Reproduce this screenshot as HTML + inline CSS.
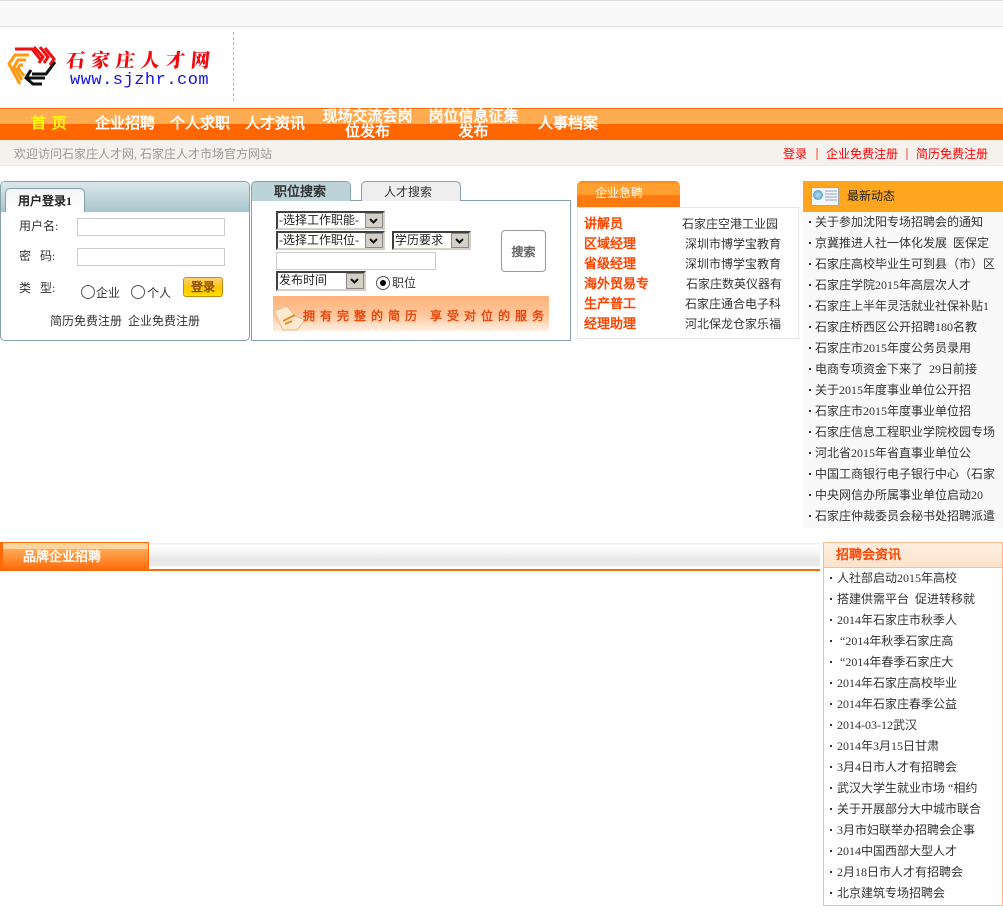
<!DOCTYPE html>
<html><head><meta charset="utf-8"><title>石家庄人才网</title>
<style>
html,body{margin:0;padding:0;background:#fff;width:1003px;height:912px;overflow:hidden}
body{position:relative;font:12px/16px "Liberation Serif",SimSun,"宋体","WenQuanYi Zen Hei Sharp","WenQuanYi Zen Hei",serif;color:#333}
div,span.a,svg{position:absolute}
.t{white-space:nowrap}
.n{color:#fff;font-weight:bold;font-size:15px;line-height:15px;text-align:center;white-space:nowrap}
.in{background:#fff;border:1px solid #ccc;box-sizing:border-box}
.rd{width:14px;height:14px;border-radius:50%;border:1px solid #555;box-sizing:border-box;background:#fff}
.sel{background:#fff;box-sizing:border-box;border-style:solid;border-width:2px;border-color:#404040 #d4d0c8 #d4d0c8 #404040;color:#222;white-space:nowrap;padding-left:1px;line-height:15px}
.ar{right:0;top:0;bottom:0;width:18px;background:#d4d0c8;border:1px solid #888;box-sizing:border-box}
.ar svg{left:3px;top:4px}
.u{color:#f40;font-weight:bold;font-size:13px;left:584px;white-space:nowrap}
.c{white-space:nowrap;color:#333}
.r{left:815px;white-space:nowrap;color:#333}
.b{left:809px;width:2px;height:2px;background:#333}
.r2{left:837px;white-space:nowrap;color:#333}
.b2{left:830px;width:2px;height:2px;background:#333}
</style></head><body>

<!-- top strip -->
<div style="left:0;top:0;width:1003px;height:27px;background:#f9f9f9;border-top:1px solid #e0e0e0;border-bottom:1px solid #e0e0e0;box-sizing:border-box"></div>

<!-- logo -->
<svg style="left:5px;top:45px" width="52" height="42" viewBox="5 45 52 42" fill="none" stroke-width="3">
<g stroke="#f01010"><polyline points="15,49 32,49 41,60"/><polyline points="34,47 43,57 39,63"/><polyline points="40,47 48,57 44,63"/><polyline points="45,48 54,59 50,65"/></g>
<g stroke="#ff9a10"><polyline points="29,55 15,55 9,64 20,84"/><polyline points="26,60 18,60 14,67 22,80"/><polyline points="23,65 20,65 18,68 24,76"/></g>
<g stroke="#111"><polyline points="55,62 46,74 32,74"/><polyline points="45,78 27,78"/><polyline points="31,70 26,78 33,84 42,84"/></g>
</svg>
<div class="t" style="left:66px;top:48px;font:900 19px/24px 'Noto Serif CJK SC',serif;letter-spacing:6px;color:#f00810;transform:skewX(-6deg)">石家庄人才网</div>
<div class="t" style="left:70px;top:72px;font:17px/18px 'Liberation Mono',monospace;letter-spacing:.5px;color:#1414e8">www.sjzhr.com</div>
<div style="left:233px;top:32px;height:69px;border-left:1px dashed #bbb"></div>

<!-- nav -->
<div style="left:0;top:108px;width:1003px;height:32px;background:linear-gradient(#ff6600 0,#ff6600 1px,#ffc080 1px,#ffc080 2px,#ffab51 2px,#ffab51 16px,#ff6600 16px)"></div>
<div class="n" style="left:31px;top:117px;color:#ff0;word-spacing:2px">首 页</div>
<div class="n" style="left:95px;top:117px">企业招聘</div>
<div class="n" style="left:170px;top:117px">个人求职</div>
<div class="n" style="left:245px;top:117px">人才资讯</div>
<div class="n" style="left:320px;top:110px;width:95px">现场交流会岗<br>位发布</div>
<div class="n" style="left:426px;top:110px;width:95px">岗位信息征集<br>发布</div>
<div class="n" style="left:538px;top:117px">人事档案</div>

<!-- sub bar -->
<div style="left:0;top:140px;width:1003px;height:26px;background:#f5f2ee;border-bottom:1px solid #eee;box-sizing:border-box"></div>
<div class="t" style="left:14px;top:146px;color:#999">欢迎访问石家庄人才网, 石家庄人才市场官方网站</div>
<div class="t" style="left:783px;top:146px;color:#f00">登录</div>
<div style="left:816px;top:148px;width:2px;height:12px;background:#ff9a9a"></div>
<div class="t" style="left:826px;top:146px;color:#f00">企业免费注册</div>
<div style="left:906px;top:148px;width:2px;height:12px;background:#ff9a9a"></div>
<div class="t" style="left:916px;top:146px;color:#f00">简历免费注册</div>

<!-- login -->
<div style="left:0;top:181px;width:250px;height:160px;box-sizing:border-box;border:1px solid #86a0a8;border-radius:5px;background:#fff;overflow:hidden">
  <div style="left:0;top:0;width:248px;height:30px;background:linear-gradient(#dbe7ec,#a8c4cc)"></div>
  <div style="left:4px;top:6px;width:80px;height:24px;box-sizing:border-box;border:1px solid #86a0a8;border-bottom:0;border-radius:5px 5px 0 0;background:linear-gradient(#f4f4f4,#fff)"></div>
</div>
<div class="t" style="left:18px;top:193px;font-weight:bold;color:#222">用户登录1</div>
<div class="t" style="left:19px;top:218px">用户名:</div>
<div class="in" style="left:77px;top:218px;width:148px;height:18px"></div>
<div class="t" style="left:19px;top:248px">密&nbsp;&nbsp;&nbsp;码:</div>
<div class="in" style="left:77px;top:248px;width:148px;height:18px"></div>
<div class="t" style="left:19px;top:280px">类&nbsp;&nbsp;&nbsp;型:</div>
<div class="rd" style="left:81px;top:285px"></div>
<div class="t" style="left:96px;top:285px">企业</div>
<div class="rd" style="left:131px;top:285px"></div>
<div class="t" style="left:147px;top:285px">个人</div>
<div class="t" style="left:183px;top:277px;width:40px;height:20px;box-sizing:border-box;border:1px solid #c98a10;border-radius:3px;background:linear-gradient(#ffd27a,#ffc800 55%,#ffe000);text-align:center;font-weight:bold;color:#8a4b00;line-height:19px">登录</div>
<div class="t" style="left:50px;top:313px">简历免费注册</div>
<div class="t" style="left:128px;top:313px">企业免费注册</div>

<!-- search -->
<div style="left:251px;top:200px;width:320px;height:141px;box-sizing:border-box;border:1px solid #86a0a8;background:#fff"></div>
<div style="left:251px;top:181px;width:100px;height:20px;box-sizing:border-box;border:1px solid #86a0a8;border-bottom:0;border-radius:5px 5px 0 0;background:#bcd3da"></div>
<div class="t" style="left:274px;top:184px;font-weight:bold;font-size:13px;color:#333">职位搜索</div>
<div style="left:361px;top:181px;width:100px;height:20px;box-sizing:border-box;border:1px solid #86a0a8;border-bottom:0;border-radius:5px 5px 0 0;background:#eee"></div>
<div class="t" style="left:384px;top:184px">人才搜索</div>

<div class="sel" style="left:276px;top:211px;width:109px;height:19px">-选择工作职能-<div class="ar"><svg width="9" height="7" viewBox="0 0 9 7" fill="none" stroke="#111" stroke-width="2"><path d="M1 1l3.5 3.5L8 1"/></svg></div></div>
<div class="sel" style="left:276px;top:231px;width:109px;height:19px">-选择工作职位-<div class="ar"><svg width="9" height="7" viewBox="0 0 9 7" fill="none" stroke="#111" stroke-width="2"><path d="M1 1l3.5 3.5L8 1"/></svg></div></div>
<div class="sel" style="left:392px;top:231px;width:79px;height:19px">学历要求<div class="ar"><svg width="9" height="7" viewBox="0 0 9 7" fill="none" stroke="#111" stroke-width="2"><path d="M1 1l3.5 3.5L8 1"/></svg></div></div>
<div class="in" style="left:276px;top:252px;width:160px;height:18px"></div>
<div class="sel" style="left:276px;top:271px;width:90px;height:20px">发布时间<div class="ar"><svg width="9" height="7" viewBox="0 0 9 7" fill="none" stroke="#111" stroke-width="2"><path d="M1 1l3.5 3.5L8 1"/></svg></div></div>
<div class="rd" style="left:376px;top:276px"></div>
<div style="left:380px;top:280px;width:6px;height:6px;border-radius:50%;background:#000"></div>
<div class="t" style="left:392px;top:275px">职位</div>
<div class="t" style="left:501px;top:230px;width:45px;height:42px;box-sizing:border-box;border:1px solid #999;border-radius:4px;background:#fff;text-align:center;line-height:42px;font-weight:bold;color:#666">搜索</div>

<!-- banner -->
<div style="left:273px;top:296px;width:276px;height:35px;background:linear-gradient(#ffb27a,#ffc79c 55%,#fff0e2);overflow:hidden"></div>
<svg style="left:273px;top:304px" width="34" height="27" viewBox="0 0 34 27"><polygon points="1,7 14,2 22,12 32,16 24,26 10,26" fill="#fde9d0" stroke="#e8b98a"/><path d="M10 17l12-6M12 20l7-3" stroke="#f08a20" stroke-width="2"/></svg>
<div class="t" style="left:303px;top:308px;font-weight:bold;letter-spacing:5px;color:#e64a10">拥有完整的简历</div>
<div class="t" style="left:430px;top:308px;font-weight:bold;letter-spacing:5px;color:#e64a10">享受对位的服务</div>

<!-- urgent -->
<div style="left:577px;top:181px;width:103px;height:26px;border-radius:5px 5px 0 0;background:linear-gradient(#ff7f10 0,#ffa030 3px,#ffa030 13px,#ff7a10 15px,#ff7a10 100%)"></div>
<div class="t" style="left:595px;top:185px;color:#fff">企业急聘</div>
<div style="left:577px;top:207px;width:222px;height:132px;box-sizing:border-box;border:1px solid #e6e6e6"></div>
<div class="u" style="top:216px">讲解员</div><div class="c" style="left:682px;top:216px">石家庄空港工业园</div>
<div class="u" style="top:236px">区域经理</div><div class="c" style="left:685px;top:236px">深圳市博学宝教育</div>
<div class="u" style="top:256px">省级经理</div><div class="c" style="left:685px;top:256px">深圳市博学宝教育</div>
<div class="u" style="top:276px">海外贸易专</div><div class="c" style="left:686px;top:276px">石家庄数英仪器有</div>
<div class="u" style="top:296px">生产普工</div><div class="c" style="left:685px;top:296px">石家庄通合电子科</div>
<div class="u" style="top:316px">经理助理</div><div class="c" style="left:685px;top:316px">河北保龙仓家乐福</div>

<!-- news -->
<div style="left:803px;top:181px;width:200px;height:347px;background:#f9f9f9"></div>
<div style="left:803px;top:181px;width:200px;height:31px;background:#ffa61e"></div>
<div style="left:811px;top:187px;width:28px;height:19px;box-sizing:border-box;border:1px solid #9ab;background:#f4f6fa"></div>
<div style="left:813px;top:190px;width:10px;height:10px;border-radius:50%;background:radial-gradient(#bfe4f4,#2f88b8)"></div>
<svg style="left:825px;top:190px" width="12" height="13"><path d="M0 1h12M0 4h12M0 7h12M0 10h12" stroke="#8fa3c0"/></svg>
<div class="t" style="left:847px;top:188px;color:#222">最新动态</div>

<div class="b" style="top:221px"></div><div class="r" style="top:214px">关于参加沈阳专场招聘会的通知</div>
<div class="b" style="top:242px"></div><div class="r" style="top:235px">京冀推进人社一体化发展&nbsp;&nbsp;医保定</div>
<div class="b" style="top:263px"></div><div class="r" style="top:256px">石家庄高校毕业生可到县（市）区</div>
<div class="b" style="top:284px"></div><div class="r" style="top:277px">石家庄学院2015年高层次人才</div>
<div class="b" style="top:305px"></div><div class="r" style="top:298px">石家庄上半年灵活就业社保补贴1</div>
<div class="b" style="top:326px"></div><div class="r" style="top:319px">石家庄桥西区公开招聘180名教</div>
<div class="b" style="top:347px"></div><div class="r" style="top:340px">石家庄市2015年度公务员录用</div>
<div class="b" style="top:368px"></div><div class="r" style="top:361px">电商专项资金下来了&nbsp;&nbsp;29日前接</div>
<div class="b" style="top:389px"></div><div class="r" style="top:382px">关于2015年度事业单位公开招</div>
<div class="b" style="top:410px"></div><div class="r" style="top:403px">石家庄市2015年度事业单位招</div>
<div class="b" style="top:431px"></div><div class="r" style="top:424px">石家庄信息工程职业学院校园专场</div>
<div class="b" style="top:452px"></div><div class="r" style="top:445px">河北省2015年省直事业单位公</div>
<div class="b" style="top:473px"></div><div class="r" style="top:466px">中国工商银行电子银行中心（石家</div>
<div class="b" style="top:494px"></div><div class="r" style="top:487px">中央网信办所属事业单位启动20</div>
<div class="b" style="top:515px"></div><div class="r" style="top:508px">石家庄仲裁委员会秘书处招聘派遣</div>

<!-- brand bar -->
<div style="left:0;top:543px;width:820px;height:26px;background:linear-gradient(#eee 0,#eee 1px,#fff 2px,#f6f6f6 10px,#e8e8e8 16px,#eaeaea 23px,#fff 24px,#fff 100%)"></div>
<div style="left:0;top:569px;width:820px;height:2px;background:#ff6a0a"></div>
<div style="left:0;top:542px;width:149px;height:29px;box-sizing:border-box;border:1px solid #ff6a0a;border-left:3px solid #ff6a0a;background:linear-gradient(#fdd5a0 0,#fdd5a0 6px,#ffaa55 6px,#ff6a0a 100%)"></div>
<div class="t" style="left:23px;top:549px;color:#fff;font-weight:bold;font-size:13px">品牌企业招聘</div>

<!-- job fair -->
<div style="left:823px;top:542px;width:180px;height:364px;box-sizing:border-box;border:1px solid #ffb88f;background:#fff"></div>
<div style="left:824px;top:543px;width:178px;height:24px;background:linear-gradient(#fff0e2,#fde2cc);border-bottom:1px solid #ffb88f"></div>
<div class="t" style="left:836px;top:547px;color:#f40;font-weight:bold;font-size:13px">招聘会资讯</div>

<div class="b2" style="top:577px"></div><div class="r2" style="top:570px">人社部启动2015年高校</div>
<div class="b2" style="top:598px"></div><div class="r2" style="top:591px">搭建供需平台&nbsp;&nbsp;促进转移就</div>
<div class="b2" style="top:619px"></div><div class="r2" style="top:612px">2014年石家庄市秋季人</div>
<div class="b2" style="top:640px"></div><div class="r2" style="top:633px;left:840px">“2014年秋季石家庄高</div>
<div class="b2" style="top:661px"></div><div class="r2" style="top:654px;left:840px">“2014年春季石家庄大</div>
<div class="b2" style="top:682px"></div><div class="r2" style="top:675px">2014年石家庄高校毕业</div>
<div class="b2" style="top:703px"></div><div class="r2" style="top:696px">2014年石家庄春季公益</div>
<div class="b2" style="top:724px"></div><div class="r2" style="top:717px">2014-03-12武汉</div>
<div class="b2" style="top:745px"></div><div class="r2" style="top:738px">2014年3月15日甘肃</div>
<div class="b2" style="top:766px"></div><div class="r2" style="top:759px">3月4日市人才有招聘会</div>
<div class="b2" style="top:787px"></div><div class="r2" style="top:780px">武汉大学生就业市场&nbsp;“相约</div>
<div class="b2" style="top:808px"></div><div class="r2" style="top:801px">关于开展部分大中城市联合</div>
<div class="b2" style="top:829px"></div><div class="r2" style="top:822px">3月市妇联举办招聘会企事</div>
<div class="b2" style="top:850px"></div><div class="r2" style="top:843px">2014中国西部大型人才</div>
<div class="b2" style="top:871px"></div><div class="r2" style="top:864px">2月18日市人才有招聘会</div>
<div class="b2" style="top:892px"></div><div class="r2" style="top:885px">北京建筑专场招聘会</div>

</body></html>
